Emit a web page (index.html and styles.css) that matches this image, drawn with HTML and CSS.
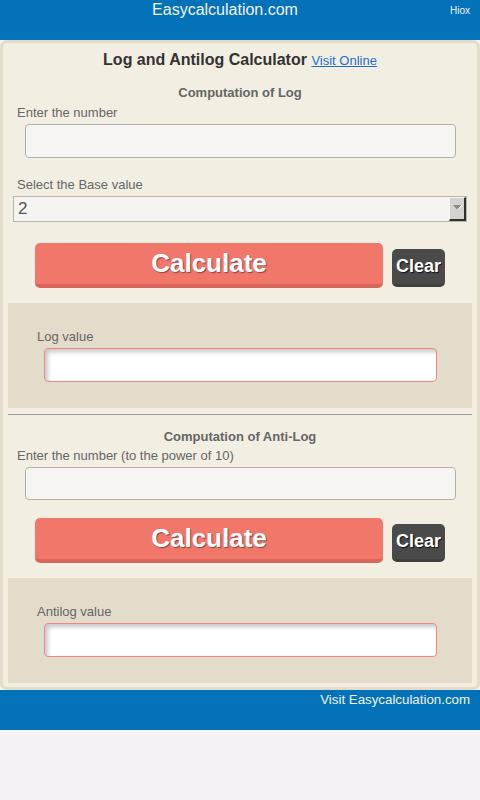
FILE: index.html
```html
<!DOCTYPE html>
<html>
<head>
<meta charset="utf-8">
<link rel="stylesheet" href="styles.css">
</head>
<body>
<header class="topbar">
  <div class="brand">Easycalculation.com</div>
  <div class="hiox">Hiox</div>
</header>
<main class="card">
  <h1 class="title">Log and Antilog Calculator <a class="visit" href="#">Visit Online</a></h1>

  <h2 class="section-title">Computation of Log</h2>
  <div class="label">Enter the number</div>
  <input class="field" type="text">
  <div class="label label-gap">Select the Base value</div>
  <div class="select">
    <span class="select-value">2</span>
    <span class="select-arrow"><svg width="9" height="6" viewBox="0 0 9 6"><path d="M0 0H9L4.5 5Z" fill="#8a8a8a"/><path d="M4.5 5L9 0" stroke="#fff" stroke-width="1"/></svg></span>
  </div>
  <div class="actions first">
    <button class="calc">Calculate</button>
    <button class="clear">Clear</button>
  </div>
  <section class="result">
    <div class="result-label">Log value</div>
    <input class="output" type="text">
  </section>

  <hr class="divider">

  <h2 class="section-title anti">Computation of Anti-Log</h2>
  <div class="label label-tight">Enter the number (to the power of 10)</div>
  <input class="field" type="text">
  <div class="actions second">
    <button class="calc">Calculate</button>
    <button class="clear">Clear</button>
  </div>
  <section class="result">
    <div class="result-label">Antilog value</div>
    <input class="output" type="text">
  </section>
</main>
<footer class="bottombar">
  <a class="footer-link" href="#">Visit Easycalculation.com</a>
</footer>
</body>
</html>
```

FILE: styles.css
```css
* { box-sizing: border-box; }
body {
  margin: 0;
  background: #f4f2f5;
  font-family: "Liberation Sans", Arial, sans-serif;
  color: #666;
}
.topbar {
  height: 40px;
  background: #0472b8;
  display: flex;
  color: #f2f2f2;
}
.brand {
  flex: 1;
  text-align: center;
  font-size: 16px;
  line-height: 20px;
  padding-top: 0;
}
.hiox {
  width: 30px;
  font-size: 10px;
  line-height: 12px;
  padding-top: 5px;
}
.card {
  display: flex;
  flex-direction: column;
  background: #f2eee2;
  border: 3px solid #e3dccb;
  border-radius: 7px;
  padding: 0 5px 4px;
  height: 650px;
}
.title {
  margin: 7px 0 0;
  text-align: center;
  font-size: 16px;
  line-height: 20px;
  font-weight: bold;
  color: #333;
}
.visit {
  font-size: 13px;
  font-weight: normal;
  color: #1f6fd0;
  text-decoration: underline;
}
.section-title {
  margin: 14px 0 0;
  text-align: center;
  font-size: 13px;
  line-height: 15px;
  font-weight: bold;
  color: #666;
}
.section-title.anti { margin-top: 14px; }
.label {
  margin: 5px 0 0 9px;
  font-size: 13px;
  line-height: 15px;
  color: #666;
}
.label-gap { margin-top: 19px; }
.label-tight { margin-top: 4px; }
.field {
  display: block;
  margin: 4px 16px 0 17px;
  height: 34px;
  border: 1px solid #b4afa6;
  border-radius: 4px;
  background: #f6f5f2;
  font: inherit;
}
.select {
  display: flex;
  align-items: center;
  margin: 4px 5px 0;
  height: 26px;
  border: 1px solid #b9b5ad;
  background: #f5f4f1;
}
.select-value {
  flex: 1;
  padding-left: 4px;
  font-size: 17px;
  color: #555;
}
.select-arrow {
  width: 17px;
  height: 24px;
  background: #d6d3ce;
  border-top: 1px solid #f4f4f4;
  border-left: 1px solid #f4f4f4;
  border-right: 2px solid #303030;
  border-bottom: 2px solid #303030;
  display: flex;
  align-items: center;
  justify-content: center;
}
.actions {
  display: flex;
  align-items: flex-end;
  gap: 9px;
  padding-left: 27px;
}
.actions.first { margin-top: 21px; }
.actions.second { margin-top: 18px; }
.calc {
  width: 348px;
  height: 45px;
  border: none;
  border-bottom: 4px solid #d9665c;
  border-radius: 5px;
  background: #f1776b;
  color: #fff;
  font-family: "Liberation Sans", Arial, sans-serif;
  font-size: 26px;
  font-weight: bold;
  text-shadow: 1px 1px 1px rgba(60, 40, 40, 0.6);
  padding: 0;
}
.clear {
  width: 53px;
  height: 38px;
  margin-bottom: 1px;
  border: none;
  border-bottom: 3px solid #3f3f3f;
  border-radius: 5px;
  background: #4a4a4a;
  color: #fff;
  font-family: "Liberation Sans", Arial, sans-serif;
  font-size: 18px;
  font-weight: bold;
  text-shadow: 1px 1px 1px #111;
  padding: 0;
}
.result {
  margin-top: 15px;
  background: #e3dccb;
  padding: 26px 35px 26px 29px;
}
.result-label {
  font-size: 13px;
  line-height: 15px;
  color: #666;
}
.output {
  display: block;
  width: 393px;
  margin: 4px 0 0 7px;
  height: 34px;
  border: 1px solid #f08383;
  border-radius: 4px;
  background: #fff;
  box-shadow: inset 3px 3px 4px rgba(0, 0, 0, 0.22);
}
.divider {
  margin: 6px 0 0;
  border: none;
  border-top: 1px solid #9b9b9b;
  height: 0;
}
.bottombar {
  height: 40px;
  background: #0472b8;
  display: flex;
  justify-content: flex-end;
  padding: 2px 10px 0 0;
}
.footer-link {
  color: #f2f2f2;
  font-size: 13.3px;
  line-height: 16px;
  text-decoration: none;
}
```
